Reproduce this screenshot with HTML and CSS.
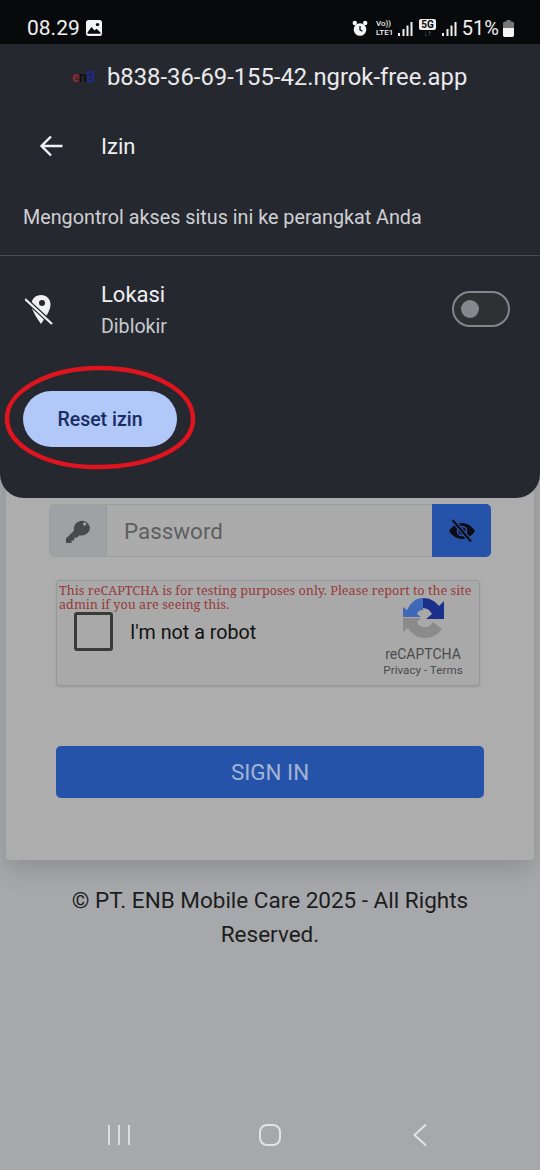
FILE: index.html
```html
<!DOCTYPE html>
<html lang="en">
<head>
    <meta charset="UTF-8">
    <meta name="viewport" content="width=device-width, initial-scale=1.0">
    <title>Izin</title>
    <link rel="stylesheet" href="styles.css">
</head>
<body>
    <div class="status-bar">
        <div class="status-left">
            <span class="clock">08.29</span>
            <svg class="status-img" width="16" height="16" viewBox="0 0 16 16"><rect width="16" height="16" rx="2.5" fill="#f4f4f4"/><circle cx="11.5" cy="4.6" r="1.7" fill="#08090b"/><path d="M1.5 12.5 5.5 7l3 3.6 2-1.8 4 3.7v1.3h-13z" fill="#08090b"/></svg>
        </div>
        <div class="status-right">
            <svg width="16" height="17" viewBox="0 0 16 17"><circle cx="8" cy="9.5" r="6.3" fill="#f4f4f4"/><path d="M8 6v3.8l2.4 1.4" fill="none" stroke="#08090b" stroke-width="1.3"/><circle cx="2.8" cy="3" r="2.2" fill="#f4f4f4"/><circle cx="13.2" cy="3" r="2.2" fill="#f4f4f4"/></svg>
            <span class="volte">Vo))<br>LTE1</span>
            <svg class="signal" width="15" height="16" viewBox="0 0 15 16"><rect x="0" y="12" width="2" height="3" fill="#eee"/><rect x="4.5" y="8" width="2" height="7" fill="#eee"/><rect x="8.5" y="4.5" width="2" height="10.5" fill="#eee"/><rect x="12.5" y="1" width="2" height="14" fill="#eee"/></svg>
            <span class="net"><span class="net-tag">5G</span><span class="net-arrows">↓↑</span></span>
            <svg class="signal" width="15" height="16" viewBox="0 0 15 16"><rect x="0" y="12" width="2" height="3" fill="#eee"/><rect x="4.5" y="8" width="2" height="7" fill="#eee"/><rect x="8.5" y="4.5" width="2" height="10.5" fill="#eee"/><rect x="12.5" y="1" width="2" height="14" fill="#eee"/></svg>
            <span class="battery-text">51%</span>
            <svg width="11" height="17" viewBox="0 0 11 17"><path d="M3.5 0h4v1.5H9A2 2 0 0 1 11 3.500V15a2 2 0 0 1-2 2H2a2 2 0 0 1-2-2V3.500a2 2 0 0 1 2-2h1.500z" fill="#77787a"/><path d="M0 8h11v7a2 2 0 0 1-2 2H2a2 2 0 0 1-2-2z" fill="#f4f4f4"/></svg>
        </div>
    </div>

    <div class="page">
        <div class="card">
            <div class="input-group">
                <div class="addon">
                    <svg width="24" height="24" viewBox="0 0 512 512"><path fill="#494a4c" d="M512 176a176 176 0 0 1-225 169l-55 55h-56v56h-56v56H0v-96l167-167A176 176 0 1 1 512 176zm-150-70a36 36 0 1 0 72 0 36 36 0 0 0-72 0z" fill-rule="evenodd"/></svg>
                </div>
                <div class="input">Password</div>
                <div class="eye-btn">
                    <svg width="28" height="24" viewBox="0 0 28 24"><path fill="#0a0d14" d="M14 4C8 4 3.500 8 1 12c2.500 4 7 8 13 8s10.500-4 13-8c-2.500-4-7-8-13-8z"/><circle cx="14" cy="12" r="4.500" fill="none" stroke="#2a55ab" stroke-width="1.600"/><path d="M5 1.500 23 22.500" stroke="#2a55ab" stroke-width="4.500"/><path d="M4.500 1 23 22.500" stroke="#0a0d14" stroke-width="2.200"/></svg>
                </div>
            </div>

            <div class="captcha">
                <div class="captcha-warning">This reCAPTCHA is for testing purposes only. Please report to the site admin if you are seeing this.</div>
                <div class="captcha-row">
                    <div class="checkbox"></div>
                    <div class="robot-label">I'm not a robot</div>
                </div>
                <div class="captcha-brand">
                    <svg width="44" height="44" viewBox="0 0 44 44"><path fill="#3f69b8" d="M2 21V11l4 3C10 6 15 2 22 2v12c-3 0-5 1-6 4l4 3z"/><path fill="#1b3189" d="M22 2c7 0 12 3 16 8l5-5v18H25l6-5c-2-4-5-6-9-6z"/><path fill="#8b8b8b" d="M2 22v14l5-4c4 6 9 10 17 10 7 0 13-3 17-9l-9-7c-2 3-4 5-8 5-4 0-7-2-8-5l4-4z"/></svg>
                    <div class="brand-name">reCAPTCHA</div>
                    <div class="brand-links">Privacy - Terms</div>
                </div>
            </div>

            <div class="sign-in">SIGN IN</div>
        </div>

        <p class="footer-text">© PT. ENB Mobile Care 2025 - All Rights Reserved.</p>

        <div class="nav-bar">
            <svg width="24" height="24" viewBox="0 0 24 24"><path d="M2 2v20M12 2v20M22 2v20" stroke="#dcdde0" stroke-width="2" fill="none"/></svg>
            <svg class="nav-home" width="24" height="24" viewBox="0 0 24 24"><rect x="2" y="2" width="20" height="20" rx="7" stroke="#e2e3e5" stroke-width="2" fill="none"/></svg>
            <svg width="16" height="24" viewBox="0 0 16 24"><path d="M14 1.500 2.500 12 14 22.500" stroke="#e2e3e5" stroke-width="2" fill="none"/></svg>
        </div>
    </div>

    <!-- permission sheet lies over the login page -->
    <div class="sheet">
        <div class="site-row">
            <span class="site-logo"><span class="logo-e">e</span><span class="logo-n">n</span><span class="logo-b">B</span></span>
            <span class="site-url">b838-36-69-155-42.ngrok-free.app</span>
        </div>
        <div class="title-row">
            <svg width="24" height="22" viewBox="0 0 24 22"><path d="M23.500 11H2.500M12 1.500 2.500 11l9.500 9.500" stroke="#f1f1f3" stroke-width="2.400" fill="none"/></svg>
            <span class="title">Izin</span>
        </div>
        <div class="subtitle">Mengontrol akses situs ini ke perangkat Anda</div>
        <div class="perm-row">
            <svg class="perm-icon" width="28" height="32" viewBox="0 0 28 32"><path fill="#f0f0f2" d="M16 2c5.500 0 9.500 4 9.500 9.500 0 6-5 13-9.500 19.500C11.500 24.500 6.500 17.500 6.500 11.500 6.500 6 10.500 2 16 2z"/><circle cx="17" cy="10" r="3" fill="#262830"/><path d="M0 6 27 31" stroke="#262830" stroke-width="4.500"/><path d="M0 6 27 31" stroke="#f0f0f2" stroke-width="2.300"/></svg>
            <div class="perm-text">
                <div class="perm-name">Lokasi</div>
                <div class="perm-state">Diblokir</div>
            </div>
            <div class="toggle"><span class="toggle-knob"></span></div>
        </div>
        <div class="reset-btn">Reset izin</div>
    </div>

    <!-- hand drawn annotation around the button -->
    <svg class="annotation" width="196" height="106" viewBox="0 0 196 106"><path d="M95 3C147 3 189 25 189 54 189 82 148 102 92 102 44 102 3 82 3 53 3 26 45 3 95 3z" fill="none" stroke="#e0141f" stroke-width="4.500"/></svg>
</body>
</html>
```

FILE: styles.css
```css
* {
    box-sizing: border-box;
}
html, body {
    margin: 0;
    height: 1170px;
    overflow: hidden;
}
body {
    position: relative;
    width: 540px;
    font-family: Roboto, "Liberation Sans", sans-serif;
    background-color: #a7a8ab;
    color: #1c1d20;
}

/* status bar */
.status-bar {
    height: 44px;
    background-color: #08090b;
    color: #f0f0f0;
    display: flex;
    align-items: center;
    justify-content: space-between;
    padding: 12px 26px 0 27px;
}
.status-left, .status-right {
    display: flex;
    align-items: center;
}
.clock {
    font-size: 21px;
    margin-right: 6px;
}
.status-right {
    gap: 5px;
}
.volte {
    font-size: 8px;
    line-height: 9px;
    font-weight: 500;
    margin-left: 3px;
}
.signal {
    margin-top: 2px;
}
.net {
    display: flex;
    flex-direction: column;
    align-items: center;
    margin: 0 1px;
}
.net-tag {
    background-color: #eee;
    color: #08090b;
    font-size: 10px;
    font-weight: 700;
    line-height: 11px;
    padding: 0 2px;
    border-radius: 2px;
}
.net-arrows {
    font-size: 8px;
    line-height: 8px;
    color: #777;
}
.battery-text {
    font-size: 20px;
    margin-right: -1px;
}

/* login page behind the sheet */
.page {
    height: 1126px;
    display: flex;
    flex-direction: column;
}
.card {
    margin: 356px 6px 0;
    height: 460px;
    padding: 104px 43px 0;
    background-color: #adadad;
    border-radius: 4px;
    box-shadow: 0 10px 24px rgba(0, 0, 0, 0.14);
}
.input-group {
    display: flex;
    height: 53px;
    border: 1px solid #9a9da2;
    border-radius: 5px;
    background-color: #ababab;
}
.addon {
    width: 57px;
    background-color: #9fa1a4;
    border-right: 1px solid #9a9da2;
    border-radius: 5px 0 0 5px;
    display: flex;
    align-items: center;
    justify-content: center;
}
.input {
    flex: 1;
    font-size: 22.400px;
    line-height: 52px;
    padding-left: 17px;
    color: #5d5f61;
}
.eye-btn {
    width: 59px;
    margin: -1px -1px -1px 0;
    background-color: #2653aa;
    border-radius: 0 5px 5px 0;
    display: flex;
    align-items: center;
    justify-content: center;
}
.captcha {
    position: relative;
    width: 424px;
    height: 106px;
    margin: 23px 0 0 7px;
    border: 1px solid #96989a;
    border-radius: 3px;
    background-color: #a9a9a9;
    box-shadow: 0 1px 2px rgba(0, 0, 0, 0.12);
}
.captcha-warning {
    font-family: "Noto Serif", "DejaVu Serif", serif;
    font-size: 12.650px;
    line-height: 14px;
    color: #973a3a;
    padding: 2px 4px 0 2px;
}
.captcha-row {
    display: flex;
    align-items: center;
    margin: 1px 0 0 17px;
}
.checkbox {
    width: 39px;
    height: 39px;
    border: 3px solid #3a3a3a;
    border-radius: 3px;
}
.robot-label {
    font-size: 19.700px;
    margin-left: 17px;
    padding-top: 2px;
    color: #111;
}
.captcha-brand {
    position: absolute;
    top: 15px;
    right: 15px;
    width: 82px;
    display: flex;
    flex-direction: column;
    align-items: center;
    color: #4b4b4b;
}
.brand-name {
    font-size: 14px;
    line-height: 16px;
    margin-top: 6px;
}
.brand-links {
    font-size: 11.700px;
    line-height: 16px;
    white-space: nowrap;
}
.sign-in {
    width: 428px;
    height: 52px;
    margin: 60px 0 0 7px;
    background-color: #2653aa;
    border-radius: 5px;
    color: #a3b3d3;
    font-size: 22.400px;
    line-height: 52px;
    text-align: center;
}
.footer-text {
    margin: 23px auto 0;
    width: 420px;
    font-size: 22.500px;
    line-height: 34px;
    text-align: center;
}
.nav-bar {
    margin-top: auto;
    height: 70px;
    padding: 0 112px 1px 107px;
    display: flex;
    align-items: center;
    justify-content: space-between;
}
.nav-home {
    margin-right: 4px;
}

/* permission sheet */
.sheet {
    position: absolute;
    top: 44px;
    left: 0;
    width: 540px;
    height: 454px;
    background-color: #262830;
    border-radius: 0 0 24px 24px;
    color: #eeeff1;
}
.site-row {
    display: flex;
    align-items: center;
    height: 66px;
    padding-left: 72px;
}
.site-logo {
    width: 25px;
    margin-right: 10px;
    font-size: 14px;
    font-weight: 700;
    letter-spacing: -0.5px;
    display: flex;
}
.logo-e {
    color: #8c2b2f;
}
.logo-n {
    color: #111;
}
.logo-b {
    color: #1e2a8a;
}
.site-url {
    font-size: 23.800px;
    color: #e9eaec;
}
.title-row {
    display: flex;
    align-items: center;
    height: 50px;
    margin-top: 11px;
    padding-left: 39px;
    gap: 38px;
}
.title {
    font-size: 22px;
}
.subtitle {
    height: 63px;
    padding: 35px 0 0 23px;
    font-size: 19.750px;
    line-height: 24px;
    color: #cfd0d3;
    white-space: nowrap;
}
.perm-row {
    margin-top: 21px;
    border-top: 1px solid #4a4c53;
    height: 108px;
    display: flex;
    align-items: center;
    padding: 0 30px 0 25px;
}
.perm-icon {
    margin-top: -2px;
}
.perm-text {
    flex: 1;
    margin-left: 48px;
    margin-top: 1px;
}
.perm-name {
    font-size: 22px;
    line-height: 32px;
}
.perm-state {
    font-size: 19.600px;
    line-height: 31px;
    color: #c9cacd;
}
.toggle {
    width: 58px;
    height: 36px;
    border: 2px solid #84868b;
    border-radius: 18px;
    background-color: #2f3034;
    display: flex;
    align-items: center;
    padding-left: 7px;
    margin-top: -1px;
}
.toggle-knob {
    width: 18px;
    height: 18px;
    border-radius: 50%;
    background-color: #86878c;
}
.reset-btn {
    width: 154px;
    height: 56px;
    margin: 28px 0 0 23px;
    border-radius: 28px;
    background-color: #b1c8f8;
    color: #1b2c64;
    font-size: 19.500px;
    font-weight: 500;
    line-height: 58px;
    text-align: center;
}
.annotation {
    position: absolute;
    top: 365px;
    left: 4px;
}
```
